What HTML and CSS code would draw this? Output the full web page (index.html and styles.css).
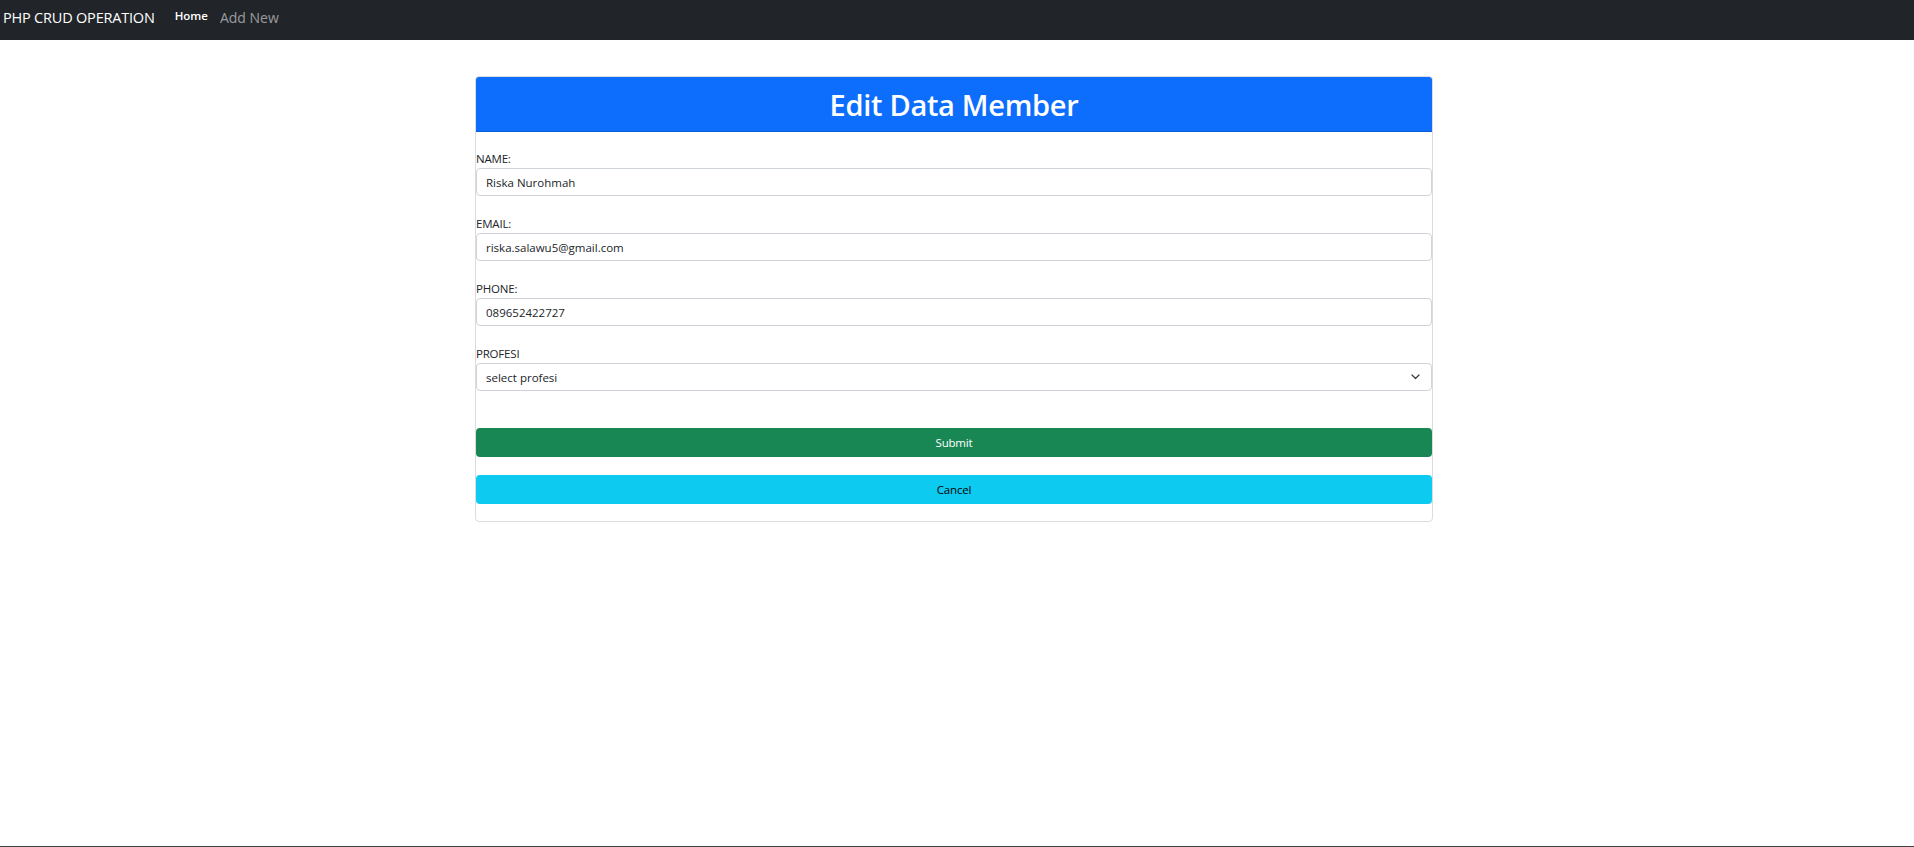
FILE: index.html
```html
<!DOCTYPE html>
<html lang="id">
<head>
<meta charset="utf-8">
<title>PHP CRUD OPERATION</title>
<link rel="stylesheet" href="styles.css">
</head>
<body>
<div class="page">
  <nav class="navbar">
    <a class="brand" href="#">PHP CRUD OPERATION</a>
    <a class="nav-link active" href="#">Home</a>
    <a class="nav-link" href="#">Add New</a>
  </nav>
  <main class="wrap">
    <div class="card">
      <div class="card-header"><h2 class="title">Edit Data Member</h2></div>
      <form class="card-body">
        <div class="group">
          <label class="label">NAME:</label>
          <input class="input" type="text" value="Riska Nurohmah">
        </div>
        <div class="group">
          <label class="label">EMAIL:</label>
          <input class="input" type="text" value="riska.salawu5@gmail.com">
        </div>
        <div class="group">
          <label class="label">PHONE:</label>
          <input class="input" type="text" value="089652422727">
        </div>
        <div class="group">
          <label class="label">PROFESI</label>
          <div class="select-wrap">
            <select class="input select"><option>select profesi</option></select>
            <svg class="chevron" width="9" height="6" viewBox="0 0 9 6"><path d="M1 1 L4.5 4.5 L8 1" fill="none" stroke="#343a40" stroke-width="1.2" stroke-linecap="round" stroke-linejoin="round"/></svg>
          </div>
        </div>
        <button class="btn btn-submit" type="button">Submit</button>
        <button class="btn btn-cancel" type="button">Cancel</button>
      </form>
    </div>
  </main>
  <div class="bottom-line"></div>
</div>
</body>
</html>
```
FILE: styles.css
```css
* { box-sizing: border-box; }
html, body { margin: 0; padding: 0; }
body {
  font-family: "Open Sans", "Noto Sans", "Liberation Sans", sans-serif;
  color: #212529;
  background: #fff;
}
.page {
  min-height: 100vh;
  display: flex;
  flex-direction: column;
}
.navbar {
  height: 40px;
  background: #212529;
  display: flex;
  align-items: center;
  padding: 0 0 6px 3px;
}
.brand {
  color: #fff;
  text-decoration: none;
  font-size: 14.5px;
  letter-spacing: -0.2px;
  margin-right: 20px;
}
.nav-link {
  text-decoration: none;
  color: rgba(255,255,255,0.55);
  font-size: 14px;
}
.nav-link.active {
  color: #fff;
  font-size: 11.5px;
  font-weight: 600;
  margin-bottom: 3px;
  margin-right: 12px;
}
.wrap {
  display: flex;
  justify-content: center;
  padding: 36px 6px 0 0;
}
.card {
  width: 958px;
  border: 1px solid #dcdcdc;
  border-radius: 4px;
  overflow: hidden;
}
.card-header {
  background: #0d6efd;
  height: 55px;
  border-bottom: 1px solid #0b5ed7;
  display: flex;
  align-items: center;
  justify-content: center;
}
.title {
  margin: 0;
  color: #fff;
  font-size: 29px;
  font-weight: 600;
  letter-spacing: -0.3px;
}
.card-body {
  padding: 0 0 17px 0;
  display: flex;
  flex-direction: column;
}
.group {
  margin-top: 19px;
  display: flex;
  flex-direction: column;
}
.group:first-child {
  margin-top: 18px;
}
.label {
  display: block;
  font-size: 11.5px;
  line-height: 18px;
  height: 18px;
  color: #212529;
  letter-spacing: -0.2px;
}
.input {
  height: 28px;
  width: 100%;
  border: 1px solid #ced4da;
  border-radius: 4px;
  padding: 0 9px;
  font-family: inherit;
  font-size: 11.5px;
  color: #212529;
  background: #fff;
}
.select-wrap {
  position: relative;
}
.select {
  appearance: none;
  -webkit-appearance: none;
}
.chevron {
  position: absolute;
  right: 12px;
  top: 11px;
}
.btn {
  height: 29px;
  width: 100%;
  border: none;
  border-radius: 4px;
  font-family: inherit;
  font-size: 11.5px;
  letter-spacing: -0.2px;
}
.btn-submit {
  margin-top: 37px;
  background: #198754;
  color: #fff;
}
.btn-cancel {
  margin-top: 18px;
  background: #0dcaf0;
  color: #000;
}
.bottom-line {
  margin-top: auto;
  height: 1px;
  background: #444;
}
```
